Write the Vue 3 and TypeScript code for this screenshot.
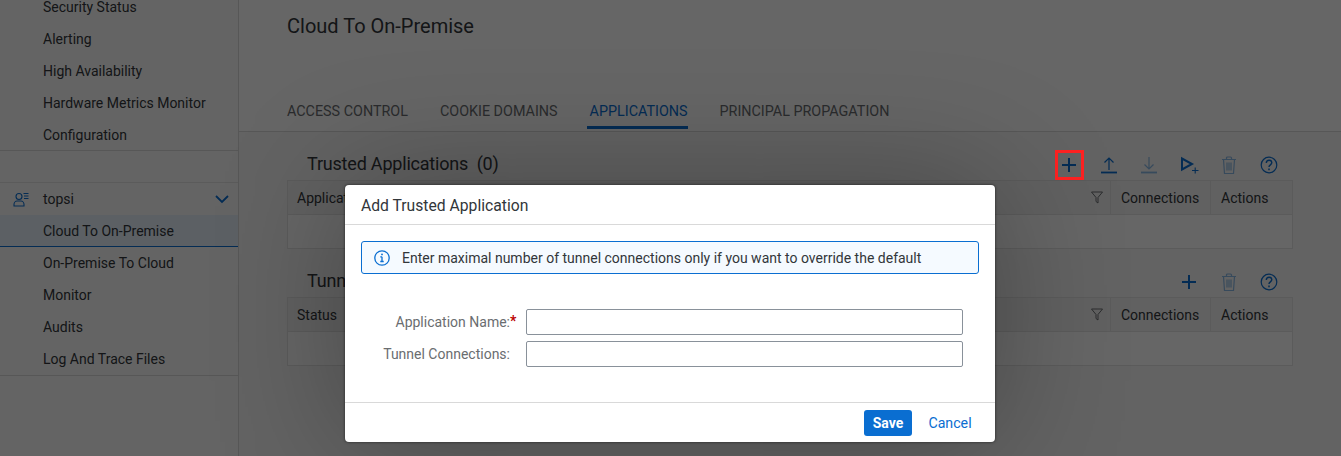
<script setup lang="ts">
const topItems: string[] = ['Security Status', 'Alerting', 'High Availability', 'Hardware Metrics Monitor', 'Configuration']
const subItems: string[] = ['On-Premise To Cloud', 'Monitor', 'Audits', 'Log And Trace Files']
const tabs = [
  { label: 'ACCESS CONTROL', active: false },
  { label: 'COOKIE DOMAINS', active: false },
  { label: 'APPLICATIONS', active: true },
  { label: 'PRINCIPAL PROPAGATION', active: false },
]
</script>

<template>
  <div class="page">
    <aside class="side">
      <ul class="list first">
        <li v-for="t in topItems" :key="t" class="item">{{ t }}</li>
      </ul>
      <div class="spacer"></div>
      <ul class="list">
        <li class="item group">
          <svg class="user" width="16" height="16" viewBox="0 0 16 16" fill="none" stroke="#0a6ed1" stroke-width="1.1">
            <circle cx="6" cy="5.5" r="3" />
            <path d="M1 15v-1.5c0-2 1.5-3.5 3-3.5h4c1.500 0 3 1.500 3 3.500V15z" />
            <path d="M10.500 2.500h5M11 5h4.500M11 7.500h4.500" />
          </svg>
          <span>topsi</span>
          <svg class="chev" width="14" height="10" viewBox="0 0 14 10" fill="none" stroke="#0a6ed1" stroke-width="1.800">
            <path d="M1 2l6 6 6-6" />
          </svg>
        </li>
        <li class="item selected">Cloud To On-Premise</li>
        <li v-for="t in subItems" :key="t" class="item">{{ t }}</li>
      </ul>
    </aside>

    <main class="main">
      <header class="head">
        <h1 class="title">Cloud To On-Premise</h1>
        <nav class="tabs">
          <span v-for="t in tabs" :key="t.label" class="tab" :class="{ on: t.active }">{{ t.label }}</span>
        </nav>
      </header>

      <section class="sec">
        <div class="bar">
          <h2 class="sec-title">Trusted Applications&nbsp;&nbsp;(0)</h2>
          <div class="tools">
            <button class="tool">
              <svg width="20" height="20" viewBox="0 0 20 20" stroke="#0a6ed1" stroke-width="2" fill="none"><path d="M10 3v14M3 10h14" /></svg>
            </button>
            <button class="tool">
              <svg width="20" height="20" viewBox="0 0 20 20" stroke="#0a6ed1" stroke-width="1.200" fill="none"><path d="M10 15V3M5.500 7.500L10 3l4.500 4.500" /><path d="M2 17.500h16" stroke-width="1.800" /></svg>
            </button>
            <button class="tool faint">
              <svg width="20" height="20" viewBox="0 0 20 20" stroke="#0a6ed1" stroke-width="1.200" fill="none"><path d="M10 2v12M5.500 9.500L10 14l4.500-4.500" /><path d="M2 17.500h16" stroke-width="1.800" /></svg>
            </button>
            <button class="tool">
              <svg width="20" height="20" viewBox="0 0 20 20" stroke="#0a6ed1" fill="none"><path d="M3 3.500v11l10-5.500z" stroke-width="2" /><path d="M13 15.500h6.500M16.200 12.500v6" stroke-width="1.100" /></svg>
            </button>
            <button class="tool faint">
              <svg width="20" height="20" viewBox="0 0 20 20" stroke="#0a6ed1" stroke-width="1.200" fill="none"><path d="M3 4.500h14M7.500 4.500V3a1 1 0 011-1h3a1 1 0 011 1v1.500M4.500 4.500l1 14h9l1-14M8 7.500v8M10 7.500v8M12 7.500v8" /></svg>
            </button>
            <button class="tool">
              <svg width="20" height="20" viewBox="0 0 20 20" fill="none" stroke="#0a6ed1" stroke-width="1.200"><circle cx="10" cy="10" r="7.800" /><path d="M7.300 8c0-1.700 1.200-2.800 2.800-2.800s2.700 1 2.700 2.400c0 2.300-2.800 2.200-2.800 4.500" stroke-width="1.400" /><path d="M10 13.500v1.700" stroke-width="1.500" /></svg>
            </button>
          </div>
        </div>
        <div class="table">
          <div class="tr th">
            <div class="c grow">Applicat<svg class="funnel" width="12" height="13" viewBox="0 0 12 13" fill="none" stroke="#6a6d70" stroke-width="1"><path d="M.5 1h11L7 6.500V12L5 10.500v-4z" /></svg></div>
            <div class="c conn">Connections</div>
            <div class="c act">Actions</div>
          </div>
          <div class="tr empty"></div>
        </div>
      </section>

      <section class="sec">
        <div class="bar">
          <h2 class="sec-title">Tunnel Connections</h2>
          <div class="tools">
            <button class="tool">
              <svg width="20" height="20" viewBox="0 0 20 20" stroke="#0a6ed1" stroke-width="2" fill="none"><path d="M10 3v14M3 10h14" /></svg>
            </button>
            <button class="tool faint">
              <svg width="20" height="20" viewBox="0 0 20 20" stroke="#0a6ed1" stroke-width="1.200" fill="none"><path d="M3 4.500h14M7.500 4.500V3a1 1 0 011-1h3a1 1 0 011 1v1.500M4.500 4.500l1 14h9l1-14M8 7.500v8M10 7.500v8M12 7.500v8" /></svg>
            </button>
            <button class="tool">
              <svg width="20" height="20" viewBox="0 0 20 20" fill="none" stroke="#0a6ed1" stroke-width="1.200"><circle cx="10" cy="10" r="7.800" /><path d="M7.300 8c0-1.700 1.200-2.800 2.800-2.800s2.700 1 2.700 2.400c0 2.300-2.800 2.200-2.800 4.500" stroke-width="1.400" /><path d="M10 13.500v1.700" stroke-width="1.500" /></svg>
            </button>
          </div>
        </div>
        <div class="table">
          <div class="tr th">
            <div class="c grow">Status<svg class="funnel" width="12" height="13" viewBox="0 0 12 13" fill="none" stroke="#6a6d70" stroke-width="1"><path d="M.5 1h11L7 6.500V12L5 10.500v-4z" /></svg></div>
            <div class="c conn">Connections</div>
            <div class="c act">Actions</div>
          </div>
          <div class="tr empty"></div>
        </div>
      </section>
    </main>

    <div class="scrim"></div>
    <div class="marker"></div>

    <div class="dialog">
      <div class="d-head">Add Trusted Application</div>
      <div class="d-body">
        <div class="strip">
          <svg width="16" height="16" viewBox="0 0 16 16" fill="none" stroke="#0a6ed1" stroke-width="1.300"><circle cx="8" cy="8" r="7.200" /><path d="M8 6.800v4.700M6.300 6.800H8M6.300 11.500h3.400" /><circle cx="8" cy="4.400" r=".9" fill="#0a6ed1" stroke="none" /></svg>
          <span>Enter maximal number of tunnel connections only if you want to override the default</span>
        </div>
        <form class="form" @submit.prevent>
          <label class="lab">Application Name:<b>*</b></label>
          <input class="inp" type="text" />
          <label class="lab">Tunnel Connections:</label>
          <input class="inp" type="text" />
        </form>
      </div>
      <div class="d-foot">
        <button class="save">Save</button>
        <button class="cancel">Cancel</button>
      </div>
    </div>
  </div>
</template>

<style>
html, body { margin: 0; height: 100%; overflow: hidden; }
</style>

<style scoped>
* { box-sizing: border-box; }
.page {
  position: relative;
  width: 1341px;
  height: 456px;
  overflow: hidden;
  display: flex;
  background: #fafafa;
  font-family: Roboto, "Noto Sans", sans-serif;
  font-size: 14px;
  color: #32363a;
}
.side {
  width: 239px;
  flex: none;
  background: #fbfbfb;
  border-right: 1px solid #d9d9d9;
}
.list { list-style: none; margin: 0; padding: 0; border-bottom: 1px solid #d9d9d9; }
.list.first { margin-top: -10px; }
.list.first .item { padding-top: 2px; }
.item {
  height: 32px;
  padding-left: 43px;
  display: flex;
  align-items: center;
}
.spacer { height: 32px; border-bottom: 1px solid #e4e4e4; }
.group { position: relative; }
.user { position: absolute; left: 13px; top: 8px; }
.chev { position: absolute; right: 9px; top: 11px; }
.selected { background: #e5f0fa; border-bottom: 1px solid #0a6ed1; }
.main { flex: 1; min-width: 0; background: #f7f7f7; }
.head {
  height: 132px;
  background: #fff;
  padding-left: 48px;
  border-bottom: 1px solid #d9d9d9;
  display: flex;
  flex-direction: column;
  justify-content: space-between;
}
.title { margin: 12px 0 0; font-size: 20px; font-weight: 400; line-height: 28px; }
.tabs { display: flex; gap: 26px; margin-left: -3px; }
.tab {
  height: 39px;
  padding: 0 3px;
  line-height: 39px;
  font-size: 14.35px;
  color: #6a6d70;
  border-bottom: 3px solid transparent;
}
.tab.on { color: #0a6ed1; border-color: #0a6ed1; margin: 0 3px 2px 0; padding-right: 0; height: 37px; }
.sec { padding: 0 48px; }
.bar {
  height: 48px;
  display: flex;
  align-items: center;
  justify-content: space-between;
  padding-left: 20px;
  padding-top: 17px;
}
.sec-title { margin: -2px 0 0; font-size: 18px; font-weight: 400; letter-spacing: -.2px; }
.tools { display: flex; gap: 12px; padding-right: 10px; }
.tool {
  width: 28px;
  height: 30px;
  padding: 0;
  border: 0;
  background: none;
  display: flex;
  align-items: center;
  justify-content: center;
}
.faint { opacity: .45; }
.marker { position: absolute; left: 1055px; top: 150px; width: 29px; height: 30px; border: 3px solid #f22; }
.table { border: 1px solid #e4e4e4; background: #fff; }
.tr { display: flex; }
.th { height: 34px; background: #f2f2f2; border-bottom: 1px solid #e4e4e4; }
.empty { height: 33px; }
.c { display: flex; align-items: center; padding-left: 10px; border-right: 1px solid #e4e4e4; }
.grow { flex: 1; justify-content: space-between; padding-left: 9px; padding-right: 7px; }
.conn { width: 100px; }
.act { width: 81px; border-right: 0; }
.scrim { position: absolute; inset: 0; background: rgba(0, 0, 0, .6); }
.dialog {
  position: absolute;
  left: 345px;
  top: 185px;
  width: 650px;
  height: 257px;
  background: #fff;
  border-radius: 4px;
  display: flex;
  flex-direction: column;
  box-shadow: 0 0 130px rgba(0, 0, 0, .3), 0 0 3px rgba(0, 0, 0, .6);
}
.d-head {
  height: 40px;
  padding: 2px 0 0 16px;
  display: flex;
  align-items: center;
  font-size: 15.7px;
  color: #32363a;
  border-bottom: 1px solid #d9d9d9;
}
.d-body { flex: 1; padding: 16px; }
.strip {
  height: 33px;
  display: flex;
  align-items: center;
  gap: 12px;
  padding-left: 12px;
  font-size: 14px;
  background: #f5faff;
  border: 1px solid #0a6ed1;
  border-radius: 3px;
}
.form {
  margin-top: 35px;
  display: grid;
  grid-template-columns: 149px 437px;
  column-gap: 16px;
  row-gap: 6px;
  align-items: center;
}
.lab { position: relative; text-align: right; font-size: 14px; color: #6a6d70; }
.lab b { position: absolute; left: 100%; top: -1px; color: #bb0000; font-weight: 700; }
.inp { height: 26px; width: 437px; border: 1px solid #89919a; border-radius: 2px; background: #fff; }
.d-foot {
  height: 40px;
  border-top: 1px solid #d9d9d9;
  display: flex;
  align-items: center;
  justify-content: flex-end;
  gap: 8px;
  padding-right: 15px;
}
.save {
  width: 48px;
  height: 26px;
  border: 0;
  border-radius: 3px;
  background: #0a6ed1;
  color: #fff;
  font: 700 14px Roboto, sans-serif;
  padding: 0;
}
.cancel {
  width: 60px;
  height: 26px;
  border: 0;
  background: none;
  color: #0a6ed1;
  font: 400 14.2px Roboto, sans-serif;
  padding: 0;
}
</style>
